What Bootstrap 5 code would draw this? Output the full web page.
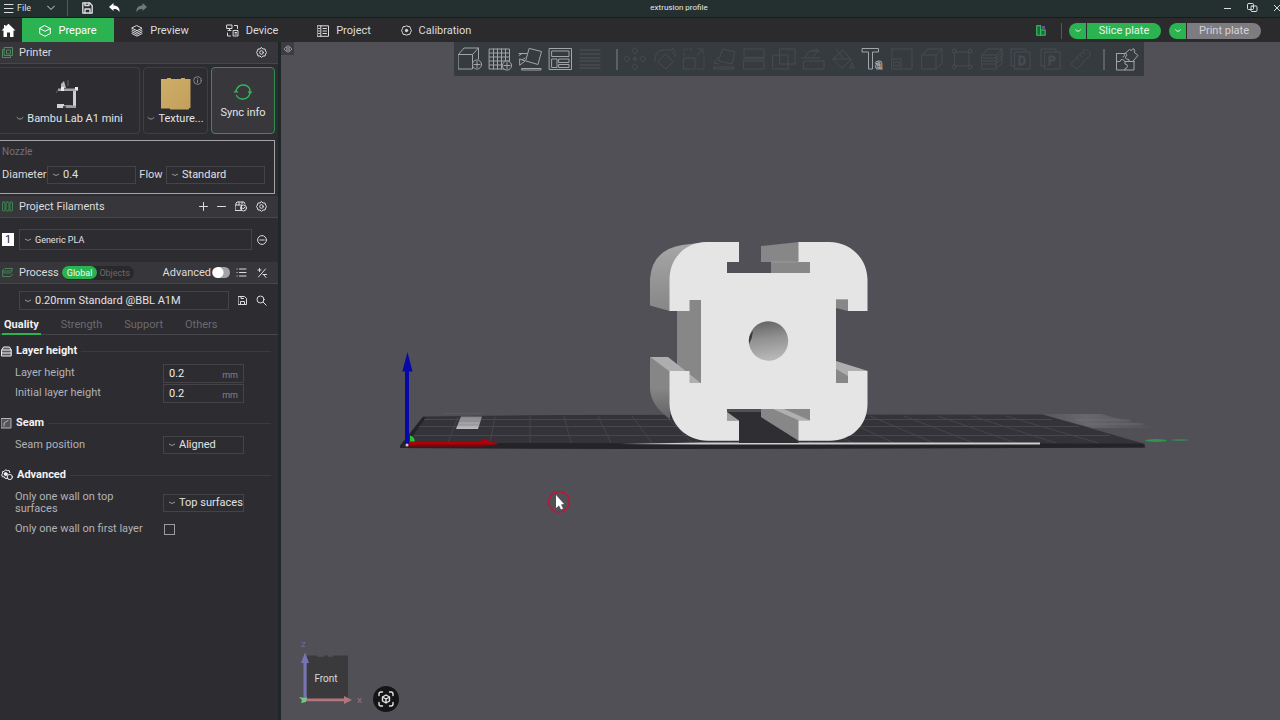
<!DOCTYPE html>
<html lang="en">
<head>
<meta charset="utf-8">
<meta name="viewport" content="width=device-width, initial-scale=1">
<title>extrusion profile</title>
<link rel="stylesheet" href="https://cdn.jsdelivr.net/npm/bootstrap@5.3.0/dist/css/bootstrap.min.css">
<style>
  :root { --green: #2bb352; --panel: #2d2c31; --head: #36363b; --line: #46464b; --text: #dcdcde; }
  body { font-family: Roboto, "Noto Sans", sans-serif; font-size: 11px; line-height: 14px; color: var(--text); background: #515056; }
  button, select, input { font: inherit; color: inherit; }
  svg { display: block; }
  .ic { fill: none; stroke: currentColor; stroke-width: 1; stroke-linecap: round; stroke-linejoin: round; flex: none; }
  .bold { stroke-width: 1.4; }
  .plain { background: none; border: 0; padding: 0; display: inline-flex; align-items: center; justify-content: center; color: inherit; }
  .titlebar { height: 17px; background: #242f2f; font-size: 8px; padding-bottom: 1px; }
  .titlebar .doc { left: 50%; transform: translateX(-50%); margin-left: 39px; color: #e6e8e8; }
  .titlebar .file { font-size: 9px; gap: 2px; }
  .titlebar .tool { margin-left: 16px; }
  .titlebar .vr { margin: 0 14px 0 12px; }
  .tabsbar { height: 25px; background: #2b2a2d; border-top: 1px solid #161c1c; }
  .tabsbar .tab { width: 92px; height: 24px; color: var(--text); text-decoration: none; gap: 7px; padding-top: 1px; }
  .tabsbar .tab.active { background: var(--green); color: #fff; }
  .tabsbar .home { margin: 0 6px 0 1px; }
  .tabsbar .vr { margin: 0 7px 0 15px; }
  .tabsbar .acts { margin-right: 19px; padding-top: 1px; }
  .pill { height: 16px; border-radius: 8px; overflow: hidden; gap: 1px; }
  .pill button { height: 16px; color: #e9f5ec; background: var(--green); }
  .pill .arrow { width: 17px; }
  .pill .go { width: 74px; }
  .pill .off { background: #7d7c81; color: #d4d3d6; }
  .side { width: 279px; background: var(--panel); border-right: 1px solid #202527; flex: none; overflow: hidden; }
  .rail { width: 2px; background: #202728; flex: none; }
  .sec { height: 22px; background: var(--head); border-bottom: 1px solid var(--line); padding: 0 11px 0 2px; gap: 6px; margin: 0; }
  .sec h2, .grp h3 { font-size: inherit; line-height: inherit; margin: 0; font-weight: 400; }
  .tiles { gap: 3px; padding: 3px 3px 0 0; }
  .tile { height: 67px; border: 1px solid #3f3f44; border-radius: 4px; background: var(--panel); color: #e4e4e6; padding: 0 0 7px; }
  .tile.side-tile { width: 65px; }
  .tile .nm { gap: 3px; }
  .tile.sync { border-color: #2f9050; background: #37373c; width: 64px; padding: 1px 0 0; gap: 4px; }
  .tile .info { right: 5px; top: 8px; }
  .nozzle { height: 54px; border: 1px solid #a3a3a6; border-left: 0; padding: 4px 9px 0 2px; margin: 6px 3px 2px 0; }
  .nozzle .cap { color: #727277; font-size: 10px; }
  .nozzle .row-f { display: grid; grid-template-columns: 45px 89fr 30px 99fr; align-items: center; padding-top: 7px; }
  .pick { appearance: none; border: 1px solid #434348; border-radius: 0; height: 18px; padding: 0 0 0 15px; min-width: 0; color: #e2e2e4;
    background: transparent url("data:image/svg+xml,%3Csvg xmlns='http://www.w3.org/2000/svg' width='8' height='6'%3E%3Cpath d='M1 2 Q4 5 7 2' fill='none' stroke='%2398989c'/%3E%3C/svg%3E") no-repeat 4px 50%; }
  .pick option { background: var(--panel); }
  .mode { background: #29292c; border-radius: 8px; font-size: 9px; height: 14px; margin-left: -3px; }
  .mode button { height: 13px; border-radius: 7px; color: #69696e; padding: 0 4px 0 2px; }
  .mode .on { background: var(--green); color: #eafff0; padding: 0 5px; }
  .toggle { appearance: none; width: 18px; height: 11px; border-radius: 6px; margin: 0 0 0 -5px; background: radial-gradient(circle at 6px 50%, #fff 5px, #a3a3a7 6px); }
  .acts-f { gap: 9px; }
  .fil { padding: 11px 11px 12px 2px; gap: 5px; }
  .fil .num { width: 12px; height: 13px; }
  .fil .pick { height: 21px; font-size: 9px; }
  .preset { padding: 7px 11px 4px 19px; gap: 9px; }
  .preset .pick { height: 19px; }
  .ptabs { height: 21px; border-bottom: 1px solid #47474b; padding: 0 0 0 2px; gap: 18px; }
  .ptabs a { color: #6a6a6f; text-decoration: none; padding: 4px 2px 0; height: 21px; }
  .ptabs a.active { color: #f0f0f2; font-weight: 700; border-bottom: 2px solid var(--green); }
  .grp { padding: 0 7px 0 1px; gap: 4px; color: #f2f2f4; height: 16px; margin-top: 12px; }
  .grp h3 { font-weight: 700; }
  .grp hr { flex: 1; margin: 0; border-color: #67676c; }
  .opt { padding: 0 34px 0 15px; min-height: 20px; color: #b2b2b6; line-height: 12px; }
  .opt .val { width: 81px; flex: none; }
  .opt .wrap { width: 110px; }
  .grp + .opt { margin-top: 4px; }
  .unit input { width: 100%; height: 19px; border: 1px solid #434348; background: transparent; padding: 0 24px 0 5px; color: #ededee; }
  .unit span { right: 6px; top: 5px; font-size: 9px; color: #828287; }
  .box { appearance: none; width: 11px; height: 11px; border: 1px solid #9c9ca0; margin: 0 0 0 1px; background: transparent; }
  .work { min-height: 0; }
  .stage { background: #515056; min-width: 0; overflow: hidden; }
  .scene { width: 100%; height: 100%; }
  .collapse-tab { left: 0; top: 0; width: 13px; height: 13px; background: #3c3c41; color: #8f8f94; }
  .tools { left: 173px; top: 0; width: 690px; max-width: calc(100% - 173px); height: 34px; background: #363b3f; padding: 0 5px 0 4px; color: #a1a5a8; }
  .tools .one { gap: 6px; }
  .tools button:disabled { color: #484b50; }
  .tools .bar { width: 2px; height: 21px; background: #5c5f63; flex: none; }
  .tools .b1 { margin: 0 5px 0 14px; } .tools .b2 { margin: 0 10px; }
  .fit { width: 26px; height: 26px; border-radius: 50%; background: #151517; color: #e4e4e4; left: 92px; bottom: 8px; }
</style>
</head>
<body class="d-flex flex-column vh-100 overflow-hidden">

<header class="titlebar d-flex align-items-center position-relative">
  <button class="plain file ms-1" aria-label="File menu"><svg class="ic" width="11" height="11" viewBox="0 0 11 11"><path d="M0 1.500h9M0 5.500h9M0 9.500h9"/></svg><span>File</span></button>
  <button class="plain ms-3" aria-label="More"><svg class="ic" width="8" height="6" viewBox="0 0 8 6"><path d="M.5 1 4 4.500 7.500 1"/></svg></button>
  <span class="vr"></span>
  <button class="plain" aria-label="Save"><svg class="ic bold" width="11" height="12" viewBox="0 0 11 12"><path d="M.8 1h7l2.400 2.400V11H.8z"/><path d="M3 11V7h5v4M3 1v2.500h4V1"/></svg></button>
  <button class="plain tool" aria-label="Undo"><svg width="11" height="10" viewBox="0 0 11 10"><path d="M0 4 4.500 0v2.500C8.500 2.500 11 5 10.500 9 9 6.500 7 6 4.500 6v2z" fill="#fff"/></svg></button>
  <button class="plain tool" aria-label="Redo"><svg width="11" height="10" viewBox="0 0 11 10"><path d="M11 4 6.500 0v2.500C2.500 2.500 0 5 .5 9 2 6.500 4 6 6.500 6v2z" fill="#70787a"/></svg></button>
  <span class="doc position-absolute text-nowrap">extrusion profile</span>
  <div class="ms-auto d-flex align-items-center gap-3">
    <button class="plain" aria-label="Minimize"><svg class="ic" width="7" height="10" viewBox="0 0 7 10"><path d="M0 5.500h7"/></svg></button>
    <button class="plain" aria-label="Restore"><svg class="ic" width="11" height="10" viewBox="0 0 11 10"><rect x=".5" y=".5" width="6" height="6" rx="1"/><rect x="4" y="3" width="6" height="5.500" rx="1"/></svg></button>
    <button class="plain" aria-label="Close"><svg class="ic" width="6" height="8" viewBox="0 0 6 8"><path d="M0 1l6 6M0 7l6-6"/></svg></button>
  </div>
</header>

<nav class="tabsbar d-flex align-items-center">
  <a href="#" class="home" aria-label="Home"><svg width="15" height="15" viewBox="0 0 15 15"><path d="M7.500.8 14.500 7.500H12.500V14H9V9.500H6V14H2.500V7.500H.5L3 5V2h1.500v1.600z" fill="#fff"/></svg></a>
  <a href="#" class="tab active d-flex align-items-center justify-content-center"><svg class="ic" width="12" height="12" viewBox="0 0 12 12"><path d="M6 .7 11.300 3.500v5L6 11.300.7 8.500v-5zM.7 3.500 6 6.300l5.300-2.800"/></svg>Prepare</a>
  <a href="#" class="tab d-flex align-items-center justify-content-center"><svg class="ic" width="12" height="12" viewBox="0 0 12 12"><path d="M6 .7 11 3.200 6 5.700 1 3.200zM1 5l5 2.500L11 5M1 6.800l5 2.500 5-2.500M1 8.600l5 2.500 5-2.500"/></svg>Preview</a>
  <a href="#" class="tab d-flex align-items-center justify-content-center"><svg class="ic" width="13" height="13" viewBox="0 0 13 13"><rect x="1" y="1" width="5" height="3.500"/><path d="M3.500 4.500v2M2 6.500h3M8.500 1.500h3v3M1.500 9v3h3"/><rect x="7.500" y="6.500" width="4.500" height="5.500"/><path d="M9 10h1.500M9 8.500h1.500"/></svg>Device</a>
  <a href="#" class="tab d-flex align-items-center justify-content-center"><svg class="ic" width="12" height="12" viewBox="0 0 12 12"><rect x=".5" y=".8" width="11" height="10.500"/><path d="M3.800.8v10.500M6 3.500h3.500M6 6h3.500M6 8.500h3.500M1.500 3.500h1M1.500 6h1M1.500 8.500h1"/></svg>Project</a>
  <a href="#" class="tab d-flex align-items-center justify-content-center"><svg class="ic" width="11" height="11" viewBox="0 0 11 11"><path d="M5.500.8l1.500.7 2 .3.600 1.900.8 1.800-.8 1.800L9 9.200l-2 .3-1.500.7L4 9.500l-2-.3-.600-1.900L.6 5.500l.8-1.800L2 1.800l2-.3z"/><circle cx="5.500" cy="5.500" r="1.200" fill="currentColor"/></svg>Calibration</a>
  <div class="acts ms-auto d-flex align-items-center">
    <button class="plain" aria-label="Plate view"><svg width="10" height="11" viewBox="0 0 10 11"><rect x=".7" y=".7" width="4" height="9.500" fill="#1d6b38" stroke="#37c766"/><rect x="4.700" y="5" width="4.500" height="5.200" fill="#1d6b38" stroke="#37c766"/><rect x="6" y="1" width="3" height="3" fill="#69508e"/></svg></button>
    <span class="vr"></span>
    <div class="pill d-flex me-2"><button class="plain arrow" aria-label="Slice options"><svg class="ic" width="6" height="4" viewBox="0 0 6 4"><path d="M.5.8Q3 4 5.500.8"/></svg></button><button class="plain go">Slice plate</button></div>
    <div class="pill d-flex"><button class="plain arrow" aria-label="Print options"><svg class="ic" width="6" height="4" viewBox="0 0 6 4"><path d="M.5.8Q3 4 5.500.8"/></svg></button><button class="plain go off">Print plate</button></div>
  </div>
</nav>

<div class="work d-flex flex-grow-1">
<aside class="side">
  <div class="sec d-flex align-items-center">
    <svg class="ic" width="11" height="11" viewBox="0 0 11 11" color="#4a8a5c"><rect x="2.500" y=".5" width="8" height="8"/><path d="M2.500 2.500h-2v8h8v-2M4.500 6.500V3h4v3.500z"/></svg>
    <h2>Printer</h2>
    <button class="plain ms-auto" aria-label="Printer settings"><svg class="ic" width="11" height="11" viewBox="0 0 11 11"><path d="M5.500.6 7 2h2l.6 2 .9 1.500-.9 1.500L9 9H7L5.500 10.400 4 9H2l-.600-2L.5 5.500 1.400 4 2 2h2z"/><circle cx="5.500" cy="5.500" r="1.800"/></svg></button>
  </div>
  <div class="tiles d-flex">
    <button class="tile border-start-0 rounded-start-0 flex-grow-1 d-flex flex-column align-items-center justify-content-end">
      <svg width="32" height="34" viewBox="0 0 32 34"><path d="M4 10.500h20v2.500H4z" fill="#a5a5a8"/><path d="M7 6l3-3 2 7H7z" fill="#b9b9bc"/><path d="M19 13h3v16h-3z" fill="#cfcfd1"/><path d="M4 12l-2 3M14 2v6" stroke="#66666a"/><path d="M5 27h12l5 1v2H4z" fill="#9b9b9f"/><path d="M3 26h7v4H3z" fill="#d3d3d5"/><path d="M9 28h3v2H9z" fill="#4c4c50"/><path d="M7 9h3v4H7zM21 9h3v3h-3z" fill="#ececee"/></svg>
      <span class="nm d-flex align-items-center"><svg class="ic" width="8" height="6" viewBox="0 0 8 6" color="#98989c"><path d="M1 1.500Q4 5 7 1.500"/></svg>Bambu Lab A1 mini</span>
    </button>
    <button class="tile side-tile d-flex flex-column align-items-center justify-content-end position-relative">
      <svg width="30" height="34" viewBox="0 0 30 34"><defs><linearGradient id="gold" x1="0" y1="0" x2="1" y2="1"><stop stop-color="#cfae6a"/><stop offset="1" stop-color="#c2a05b"/></linearGradient></defs><path d="M0 1h6V0h4v1h10V0h4v1h5.500v29H28v1.500H9V30.500H0z" fill="url(#gold)"/></svg>
      <svg class="ic info position-absolute" width="9" height="9" viewBox="0 0 9 9" color="#85858a"><circle cx="4.500" cy="4.500" r="3.800"/><path d="M4.500 4v2.500M4.500 2.300v.2"/></svg>
      <span class="nm d-flex align-items-center"><svg class="ic" width="8" height="6" viewBox="0 0 8 6" color="#98989c"><path d="M1 1.500Q4 5 7 1.500"/></svg>Texture...</span>
    </button>
    <button class="tile sync d-flex flex-column align-items-center justify-content-center">
      <svg class="ic bold" width="20" height="20" viewBox="0 0 20 20" color="#31b95a"><path d="M3.500 7.500a7.300 7.300 0 0 1 13-1M16.500 12.500a7.300 7.300 0 0 1-13 1M16.800 7v3"/><path d="M.5 10.500 3 7.500l2.500 3zM14.500 9.500h5L17 12.500z" fill="currentColor" stroke="none"/></svg>
      <span>Sync info</span>
    </button>
  </div>
  <div class="nozzle">
    <div class="cap">Nozzle</div>
    <div class="row-f">
      <label for="dia">Diameter</label>
      <select id="dia" class="pick"><option>0.4</option></select>
      <label for="flow" class="text-center">Flow</label>
      <select id="flow" class="pick"><option>Standard</option></select>
    </div>
  </div>
  <div class="sec d-flex align-items-center">
    <svg class="ic" width="11" height="11" viewBox="0 0 11 11" color="#3f8452"><rect x=".5" y="1" width="2.500" height="9" rx="1"/><rect x="4" y="1" width="3" height="9" rx="1"/><rect x="8" y="1" width="2.500" height="9" rx="1"/></svg>
    <h2>Project Filaments</h2>
    <div class="acts-f ms-auto d-flex align-items-center">
      <button class="plain" aria-label="Add filament"><svg class="ic" width="9" height="9" viewBox="0 0 9 9"><path d="M.5 4.500h8M4.500.5v8"/></svg></button>
      <button class="plain" aria-label="Remove filament"><svg class="ic" width="9" height="9" viewBox="0 0 9 9"><path d="M.5 4.500h8"/></svg></button>
      <button class="plain" aria-label="Sync filaments"><svg class="ic" width="12" height="11" viewBox="0 0 12 11"><path d="M1 4V2l1-1h7l1 2M.5 4h6v5.500h-6zM4 1v3M7 1v2"/><circle cx="8.500" cy="7" r="3"/><path d="M7.500 7l.8 1 1.500-2"/></svg></button>
      <button class="plain" aria-label="Filament settings"><svg class="ic" width="11" height="11" viewBox="0 0 11 11"><path d="M5.500.6 7 2h2l.6 2 .9 1.500-.9 1.500L9 9H7L5.500 10.400 4 9H2l-.600-2L.5 5.500 1.400 4 2 2h2z"/><circle cx="5.500" cy="5.500" r="1.800"/></svg></button>
    </div>
  </div>
  <div class="fil d-flex align-items-center">
    <span class="num bg-white text-dark text-center">1</span>
    <select class="pick flex-grow-1" aria-label="Filament"><option>Generic PLA</option></select>
    <button class="plain" aria-label="Filament menu"><svg class="ic" width="10" height="10" viewBox="0 0 10 10"><circle cx="5" cy="5" r="4.400"/><path d="M2.800 5h4.400"/></svg></button>
  </div>
  <div class="sec d-flex align-items-center">
    <svg class="ic" width="11" height="11" viewBox="0 0 11 11" color="#4a7f59"><path d="M3 1.500h7.500l-2 2.500H.5zM.5 4v2h8l2-2.500M.5 7v2.500h8L10.500 7"/></svg>
    <h2>Process</h2>
    <div class="mode d-flex align-items-center"><button class="plain on">Global</button><button class="plain">Objects</button></div>
    <label for="adv" class="ms-auto">Advanced</label>
    <input id="adv" type="checkbox" role="switch" class="toggle">
    <button class="plain" aria-label="List"><svg class="ic" width="11" height="11" viewBox="0 0 11 11"><path d="M3.500 2H10M3.500 5.500H10M3.500 9H10M1 2h.2M1 5.500h.2M1 9h.2"/></svg></button>
    <button class="plain ms-1" aria-label="Compare"><svg class="ic" width="10" height="10" viewBox="0 0 10 10"><path d="M1.500 9 8.500 1M1 2h3M2.500 .5v3M6 6.500h3.500M6.500 6.500l2.500 3"/></svg></button>
  </div>
  <div class="preset d-flex align-items-center">
    <select class="pick flex-grow-1" aria-label="Process preset"><option>0.20mm Standard @BBL A1M</option></select>
    <button class="plain" aria-label="Save preset"><svg class="ic" width="9" height="9" viewBox="0 0 9 9"><path d="M.5.500H6.500l2 2v6H.5zM2.500 8.500v-3h4v3M3 .500v2h2.500"/></svg></button>
    <button class="plain" aria-label="Search"><svg class="ic" width="11" height="11" viewBox="0 0 11 11"><circle cx="4.500" cy="4.500" r="3.500"/><path d="M7.200 7.200l3 3"/></svg></button>
  </div>
  <nav class="ptabs d-flex">
    <a href="#" class="active">Quality</a><a href="#">Strength</a><a href="#">Support</a><a href="#">Others</a>
  </nav>

  <div class="grp d-flex align-items-center mt-2"><svg class="ic" width="11" height="11" viewBox="0 0 11 11"><path d="M.8 4 2.500 1h6l1.700 3v6H.8z" fill="#5a5a5f"/><path d="M.8 4h9.400M.8 7h9.400"/></svg><h3>Layer height</h3><hr></div>
  <div class="opt d-flex align-items-center justify-content-between"><label for="lh">Layer height</label><div class="val unit position-relative"><input id="lh" value="0.2"><span class="position-absolute">mm</span></div></div>
  <div class="opt d-flex align-items-center justify-content-between"><label for="ilh">Initial layer height</label><div class="val unit position-relative"><input id="ilh" value="0.2"><span class="position-absolute">mm</span></div></div>

  <div class="grp d-flex align-items-center"><svg class="ic" width="11" height="11" viewBox="0 0 11 11"><rect x=".5" y=".5" width="9.500" height="9.500" fill="#55555a" stroke="#b5b5b8"/><path d="M3 8V5l4-2.500" stroke-opacity=".6"/></svg><h3>Seam</h3><hr></div>
  <div class="opt d-flex align-items-center justify-content-between"><label for="seam">Seam position</label><select id="seam" class="pick val"><option>Aligned</option></select></div>

  <div class="grp d-flex align-items-center"><svg class="ic" width="12" height="12" viewBox="0 0 12 12"><path d="M6 9.500 4 9.200l-.700-1.400H1.500L.6 6l1-1.300L1.300 2.800 3.200 2.400 4.500.8l1.700.8 2 .0.600 2"/><circle cx="4.700" cy="5" r="1.500" fill="currentColor"/><circle cx="8.800" cy="8" r="2.600"/></svg><h3>Advanced</h3><hr></div>
  <div class="opt d-flex align-items-center justify-content-between pt-1"><label for="top" class="wrap">Only one wall on top surfaces</label><select id="top" class="pick val"><option>Top surfaces</option></select></div>
  <div class="opt d-flex align-items-center justify-content-between mt-1"><label for="first">Only one wall on first layer</label><div class="val d-flex"><input id="first" type="checkbox" class="box"></div></div>
</aside>
<div class="rail"></div>

<main class="stage flex-grow-1 position-relative">
  <svg class="scene" viewBox="281 42 999 678" preserveAspectRatio="xMidYMid meet" role="img" aria-label="3D view of an extrusion profile on the build plate">
    <defs>
      <linearGradient id="bore" x1="0" y1="0" x2=".15" y2="1"><stop stop-color="#5f5f5f"/><stop offset=".5" stop-color="#929292"/><stop offset="1" stop-color="#b6b6b6"/></linearGradient>
      <linearGradient id="curve" x1="0" y1="0" x2="0" y2="1"><stop stop-color="#a8a8a8"/><stop offset="1" stop-color="#868686"/></linearGradient>
      <linearGradient id="under" x1="0" y1="0" x2="0" y2="1"><stop offset=".5" stop-color="#868686"/><stop offset="1" stop-color="#626262"/></linearGradient>
      <linearGradient id="tag" x1="0" y1="0" x2="0" y2="1"><stop stop-color="#85858a"/><stop offset="1" stop-color="#bdbdc0"/></linearGradient>
      <linearGradient id="haze"><stop stop-color="#77767c" stop-opacity=".15"/><stop offset=".4" stop-color="#77767c" stop-opacity=".6"/><stop offset="1" stop-color="#77767c" stop-opacity="0"/></linearGradient>
    </defs>
    <!-- build plate -->
    <path d="M400 445.500 423 416.500 560 415 1043 414.500 1145 444v3.500L640 449 400 448z" fill="#343339"/>
    <path d="M400 446 423 417h3L408 443l735 .5 2 4L640 449 400 448z" fill="#242428"/>
    <path d="M424 419.500h628M419 426.500h660M414 435.500h696" stroke="#4e4d53" stroke-width=".8"/>
    <path d="M458 417 448 442M495 417 490 443M530 416v27M564 416l7 27M598 416l13 27M632 416l20 27M666 416l26 27M700 416l31 27M734 416l38 27M768 416l44 27M802 416l51 27M836 416l58 27M870 416l64 27M904 416l70 27M938 416l78 27M972 416l84 27M1006 416l92 27" stroke="#4a494f" stroke-width=".8"/>
    <path d="M442 413.500h40" stroke="#3d6a4e"/>
    <path d="M461 416.500h21l-4 12.500h-22z" fill="url(#tag)"/><path d="M459 421h22M458 425h22" stroke="#77777b" stroke-width=".5"/>
    <path d="M619 444 700 442.500h340v2H700z" fill="#cfcfd1"/>
    <path d="M1040 414h61l54 14h-62z" fill="url(#haze)"/>
    <path d="M1075 420h55M1085 424h58" stroke="#78777d" stroke-width=".6"/>
    <ellipse cx="1156" cy="440.500" rx="11" ry="1.400" fill="#2f9650"/><ellipse cx="1180" cy="440" rx="8" ry="1" fill="#3c8052"/>
    <!-- extrusion depth -->
    <path d="M650 305.500V279Q652 250 682 245L707 242 720 260 669.500 311z" fill="url(#curve)"/>
    <path d="M677 299h24v84l-24-18zM836 299.500h12V311l-12-3z" fill="#878787"/>
    <path d="M650 357 670 371v48Q650 405 650 388z" fill="url(#under)"/>
    <path d="M650 357h18l33 26h-12V371h-20z" fill="#aeaeae"/>
    <path d="M761 246 799 242v20h11v11h-39v-11h-10z" fill="#878787"/><path d="M771 262h28" stroke="#aaa" stroke-width=".6"/>
    <path d="M836 369l12 2v12h-12z" fill="#878787"/><path d="M836 361l32 10h-20v5l-12-7z" fill="#aeaeae"/>
    <path d="M727 412h34l7 6 31 25H739V420.500L727 412z" fill="#2f2e33"/>
    <path d="M727 412l12 8.500h-12z" fill="#a0a0a0"/>
    <path d="M761 409h49v12h-11v20l-38-24z" fill="#878787"/><path d="M773 409h11l26 11.500h-11z" fill="#b0b0b0"/>
    <!-- front face -->
    <path d="M669.500 279C670 257 686 242 707 242h32v20h-12v11h83v-11h-11.500v-20H829C851 242 867.500 259 867.500 280v31H848v-11.500h-12V383h12v-12h19.500v33C867.500 426 851 440.700 830 440.700h-31.500V420.500H810V409h-83v11.500h12v20.200h-31C686 440.700 669.500 424 669.500 403v-32h20v12H701v-83h-11.500v11h-20z" fill="#e5e5e5"/>
    <circle cx="768.500" cy="341" r="19.700" fill="url(#bore)"/><path d="M749 344q-1-9 4-13-.5 7-4 13z" fill="#39393c"/>
    <!-- origin axes -->
    <path d="M410 435.500q5 1 5 7.500h-5z" fill="#25c532"/>
    <path d="M408 441.500h74V438.500l17 5.500-17 2v-.5h-74z" fill="#b00008"/><path d="M408 444.500h74l17-.5-17 2.500h-74z" fill="#850007"/>
    <path d="M405 444v-72.500h-2.700L407.500 352l5 19.500H409V444z" fill="#0808a8"/>
    <circle cx="407" cy="445" r="1.500" fill="#c9c9dc"/>
    <!-- pointer -->
    <circle cx="559" cy="501.800" r="10.300" fill="none" stroke="#c0143a" stroke-width="1.400"/>
    <path d="M556 495v13l3-2.500 2 4 2-1-2-4 3-.5z" fill="#fff"/>
    <!-- view cube -->
    <path d="M307 655.500h41V699h-41z" fill="#3a3a3c"/><path d="M317 656h7M328 656h5" stroke="#5e5e60"/>
    <path d="M303.500 699v-36H301L305 652.500 309 663h-2.500v36z" fill="#7774b4"/>
    <path d="M305 698.500h39V696l8 4-8 4v-2.800h-39z" fill="#b2757c"/>
    <path d="M299 697l6 1 2-1-1 5-5 1 1-3z" fill="#72c982"/>
    <g font-size="8"><text x="301" y="647" fill="#7471aa">Z</text><text x="357" y="703" fill="#a2757c">X</text></g>
    <text x="326" y="682" text-anchor="middle" font-size="10" fill="#dadada">Front</text>
  </svg>

  <button class="plain collapse-tab position-absolute" aria-label="Collapse sidebar"><svg class="ic" width="10" height="8" viewBox="0 0 10 8"><path d="M3.500 1.500 1 4l2.500 2.500zM5 .5v7M6.500 1.500 9 4 6.500 6.500z"/></svg></button>

  <div class="tools position-absolute d-flex align-items-center">
    <div class="one d-flex">
      <button class="plain" aria-label="Add"><svg class="ic" width="24" height="24" viewBox="0 0 24 24"><path d="M0.500 7.500h14v14.500h-14zM.5 7.500 6 1h14.500l-6 6.500M20.500 1v11"/><circle cx="19" cy="17.500" r="4.600" fill="#363b3f"/><path d="M19 14.500v6M16 17.500h6"/></svg></button>
      <button class="plain" aria-label="Add plate"><svg class="ic" width="24" height="24" viewBox="0 0 24 24"><path d="M1.500 2h20v20h-20zM5.500 2v20M9.500 2v20M13.500 2v20M17.500 2v20M1.500 6h20M1.500 10h20M1.500 14h20M1.500 18h20"/><circle cx="19" cy="18.500" r="4.600" fill="#363b3f"/><path d="M19 15.500v6M16 18.500h6"/></svg></button>
      <button class="plain" aria-label="Orient"><svg class="ic" width="24" height="24" viewBox="0 0 24 24"><path d="M11.500 1.500 23.500 4.500 20 17.500 8 14zM4 21.500h19v1.500H4zM1 6.500h8M1 8.500l3-2M2 12l5 2-5 4zM7 11l-3 2"/></svg></button>
      <button class="plain" aria-label="Arrange"><svg class="ic" width="24" height="24" viewBox="0 0 24 24"><path d="M1.500 1.500h22v21h-22zM4 4h17v5.500H4zM4 12h5v8.500H4zM11 12h10v3.500H11zM11 17.500h10v3H11z"/></svg></button>
      <button class="plain" disabled aria-label="Layers"><svg class="ic bold" width="24" height="24" viewBox="0 0 24 24"><path d="M2 3h20M2 7h20M2 11h20M2 14h20M2 18h20M2 21h20"/></svg></button>
    </div>
    <span class="bar b1"></span>
    <div class="d-flex flex-grow-1 justify-content-between">
      <button class="plain" disabled aria-label="Move"><svg class="ic" width="24" height="24" viewBox="0 0 24 24"><path d="M12 1l3 3-3 3-3-3zM12 17l3 3-3 3-3-3zM4 9l3 3-3 3-3-3zM20 9l3 3-3 3-3-3zM12 10v4M10 12h4"/></svg></button>
      <button class="plain" disabled aria-label="Rotate"><svg class="ic" width="24" height="24" viewBox="0 0 24 24"><path d="M13 7l7 8-7 7-8-7zM2 14Q1 3 12 3h7M19 1l3 2.500-3 3M22 6v4"/></svg></button>
      <button class="plain" disabled aria-label="Scale"><svg class="ic" width="24" height="24" viewBox="0 0 24 24"><path d="M2 11h11v11H2zM15 8l5-5M16 2h5v5"/><path stroke-dasharray="2 2" d="M2 8V2h10M22 10v12h-6"/></svg></button>
      <button class="plain" disabled aria-label="Lay on face"><svg class="ic" width="24" height="24" viewBox="0 0 24 24"><path d="M11 2l12 3-3 12-13-3zM2 20h20v2H2zM6 10l-4 6 5 1"/></svg></button>
      <button class="plain" disabled aria-label="Cut"><svg class="ic" width="24" height="24" viewBox="0 0 24 24"><path d="M2 10V2h20v8zM2 14h20v8H2zM1 12h22"/></svg></button>
      <button class="plain" disabled aria-label="Boolean"><svg class="ic" width="24" height="24" viewBox="0 0 24 24"><path d="M1 8h15v14H1zM8 2h15v15H8z"/></svg></button>
      <button class="plain" disabled aria-label="Supports"><svg class="ic" width="24" height="24" viewBox="0 0 24 24"><path d="M3 14h20v8H3zM1 11h18M4 10 8 4h9l-5 6M11 4l5-2 3 3"/></svg></button>
      <button class="plain" disabled aria-label="Paint"><svg class="ic" width="24" height="24" viewBox="0 0 24 24"><path d="M2 12 12 3l8 10-9 8zM2 12h18M5 2l7 9M21 16l2 5h-4z"/></svg></button>
      <button class="plain" aria-label="Text"><svg class="ic" width="24" height="24" viewBox="0 0 24 24"><path d="M1.500 1.500h16v3.500h-6V22h-4V5h-6z"/><text x="14" y="22" font-size="14" font-weight="700">a</text></svg></button>
      <button class="plain" disabled aria-label="Emboss"><svg class="ic" width="24" height="24" viewBox="0 0 24 24"><path d="M2 2h20v20H12M2 2v8M2 12h9v10H2zM4 15h5v4H4z"/></svg></button>
      <button class="plain" disabled aria-label="Primitive"><svg class="ic" width="24" height="24" viewBox="0 0 24 24"><path d="M2 8h14v14H2zM2 8l6-6h14l-6 6M22 2v14l-6 6"/></svg></button>
      <button class="plain" disabled aria-label="Mesh"><svg class="ic" width="24" height="24" viewBox="0 0 24 24"><path d="M5 5h14v14H5z"/><circle cx="4" cy="4" r="2"/><circle cx="20" cy="4" r="2"/><circle cx="4" cy="20" r="2"/><circle cx="20" cy="20" r="2"/></svg></button>
      <button class="plain" disabled aria-label="Variable height"><svg class="ic" width="24" height="24" viewBox="0 0 24 24"><path d="M2 8h14v14H2zM2 8l6-6h14l-6 6M22 2v14l-6 6M2 11h14l6-6M2 14h14l6-6M2 17h14l6-6"/></svg></button>
      <button class="plain" disabled aria-label="Assign D"><svg class="ic" width="24" height="24" viewBox="0 0 24 24"><path d="M6 5h15v17H6zM6 19H2V2h15v3"/><text x="9" y="18" font-size="12">D</text></svg></button>
      <button class="plain" disabled aria-label="Assign P"><svg class="ic" width="24" height="24" viewBox="0 0 24 24"><path d="M6 5h15v17H6zM6 19H2V2h15v3"/><text x="9" y="18" font-size="12">P</text></svg></button>
      <button class="plain" disabled aria-label="Measure"><svg class="ic" width="24" height="24" viewBox="0 0 24 24"><path d="M2 17 16 2l6 5L8 22zM14 5l2 2M11 8l2 2M8 11l2 2"/></svg></button>
    </div>
    <span class="bar b2"></span>
    <button class="plain" aria-label="Assembly"><svg class="ic" width="24" height="24" viewBox="0 0 24 24"><path d="M1.500 6.500H9q1.500 3-1 3.500M1.500 6.500v16.500h17.500v-9M1.500 14.500h3.500q.5-2.500 2.500-2t2 2H19M10 14.500v2.500q3 .5 2.500 2.500T10 21.500V23M9 6.500l2-.5M14 14.500v-2q-3 0-3.500-1.500t1.500-2.500L10.500 6l4-3.500 2 1q1-2.500 2.500-1.500t0 3l4 3.500-4.500 5"/></svg></button>
  </div>

  <button class="plain fit position-absolute" aria-label="Fit view"><svg class="ic bold" width="16" height="16" viewBox="0 0 16 16"><path d="M1 4.500V3q0-2 2-2h1.500M11.500 1H13q2 0 2 2v1.500M15 11.500V13q0 2-2 2h-1.500M4.500 15H3q-2 0-2-2v-1.500M8 4l3.500 2v4L8 12 4.500 10V6zM4.500 6 8 8l3.500-2M8 8v4"/></svg></button>
</main>
</div>
<script src="https://cdn.jsdelivr.net/npm/bootstrap@5.3.0/dist/js/bootstrap.bundle.min.js"></script>
</body>
</html>
